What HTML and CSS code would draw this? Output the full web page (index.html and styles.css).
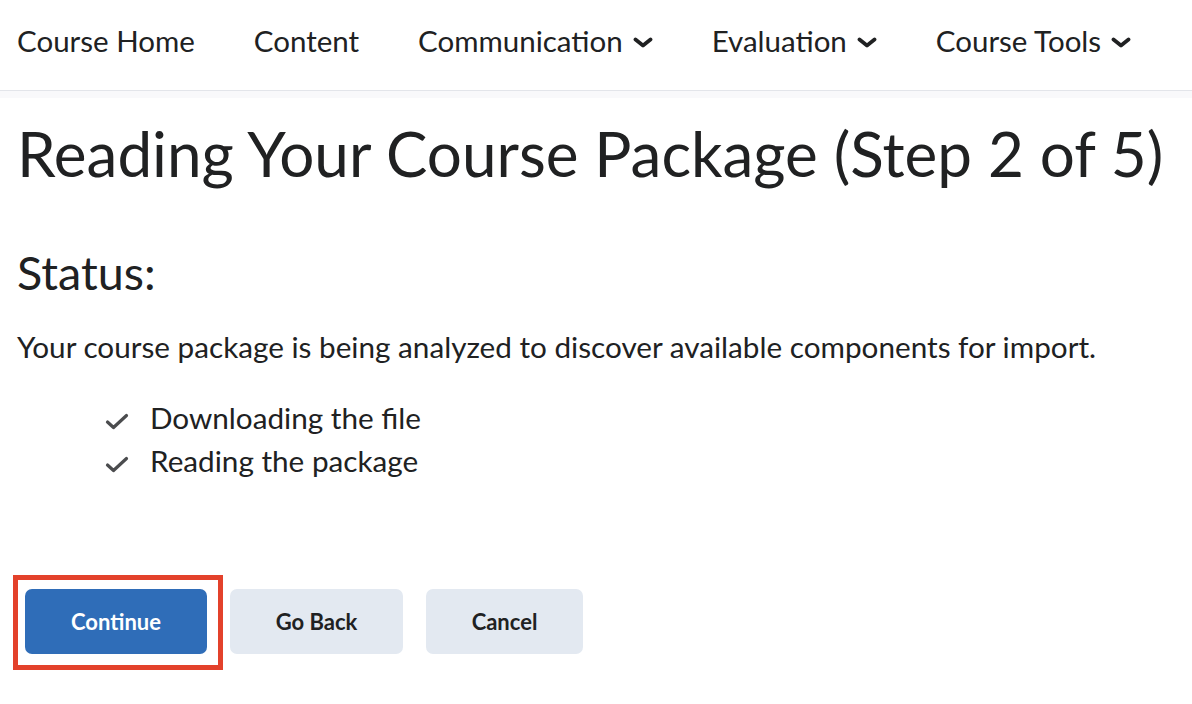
FILE: index.html
```html
<!DOCTYPE html>
<html lang="en">
<head>
<meta charset="utf-8">
<title>Reading Your Course Package</title>
<link rel="stylesheet" href="styles.css">
</head>
<body>
<header class="navbar">
  <nav class="nav">
    <a class="nav-item">Course Home</a>
    <a class="nav-item">Content</a>
    <a class="nav-item">Communication<svg class="chev" viewBox="0 0 20 11" width="20" height="11"><path d="M2.5 2.5 L10 8.5 L17.5 2.5" fill="none" stroke="#202122" stroke-width="3.8" stroke-linecap="round" stroke-linejoin="round"/></svg></a>
    <a class="nav-item">Evaluation<svg class="chev" viewBox="0 0 20 11" width="20" height="11"><path d="M2.5 2.5 L10 8.5 L17.5 2.5" fill="none" stroke="#202122" stroke-width="3.8" stroke-linecap="round" stroke-linejoin="round"/></svg></a>
    <a class="nav-item">Course Tools<svg class="chev" viewBox="0 0 20 11" width="20" height="11"><path d="M2.5 2.5 L10 8.5 L17.5 2.5" fill="none" stroke="#202122" stroke-width="3.8" stroke-linecap="round" stroke-linejoin="round"/></svg></a>
  </nav>
</header>
<div class="strip"></div>
<main class="main">
  <h1 class="title">Reading Your Course Package (Step 2 of 5)</h1>
  <h2 class="subtitle">Status:</h2>
  <p class="desc">Your course package is being analyzed to discover available components for import.</p>
  <ul class="steps">
    <li class="step"><svg class="check" viewBox="0 0 24 17" width="24" height="17"><path d="M2.5 9 L8.5 14.5 L21.5 2.5" fill="none" stroke="#4b4c4e" stroke-width="3.2" stroke-linecap="round" stroke-linejoin="round"/></svg>Downloading the file</li>
    <li class="step"><svg class="check" viewBox="0 0 24 17" width="24" height="17"><path d="M2.5 9 L8.5 14.5 L21.5 2.5" fill="none" stroke="#4b4c4e" stroke-width="3.2" stroke-linecap="round" stroke-linejoin="round"/></svg>Reading the package</li>
  </ul>
  <div class="actions">
    <div class="highlight">
      <button class="btn btn-primary">Continue</button>
    </div>
    <button class="btn btn-secondary btn-back">Go Back</button>
    <button class="btn btn-secondary btn-cancel">Cancel</button>
  </div>
</main>
</body>
</html>
```
FILE: styles.css
```css
* { box-sizing: border-box; }
html, body {
  margin: 0;
  padding: 0;
  background: #ffffff;
  color: #202122;
  font-family: Lato, "Noto Sans", sans-serif;
}
body {
  min-height: 100vh;
}
.navbar {
  height: 91px;
  border-bottom: 1px solid #e3e5ea;
  background: #ffffff;
}
.nav {
  display: flex;
  align-items: center;
  height: 90px;
  padding: 0 0 9px 17px;
  gap: 59px;
}
.nav-item {
  display: flex;
  align-items: center;
  gap: 10px;
  font-size: 29.5px;
  line-height: 36px;
  color: #202122;
  white-space: nowrap;
}
.chev { display: block; margin-top: 3px; }
.strip {
  height: 7px;
  background: #f9f9fb;
}
.main {
  padding: 0 17px 40px;
}
.title {
  margin: 18px 0 0;
  font-size: 62px;
  font-weight: 400;
  line-height: 74px;
  white-space: nowrap;
}
.subtitle {
  margin: 54px 0 0;
  font-size: 46.7px;
  font-weight: 400;
  line-height: 56px;
}
.desc {
  margin: 27px 0 0;
  font-size: 29.7px;
  line-height: 40px;
  white-space: nowrap;
}
.steps {
  list-style: none;
  margin: 29px 0 0;
  padding: 0 0 0 88px;
}
.step {
  display: flex;
  align-items: center;
  gap: 21px;
  font-size: 29.7px;
  line-height: 43px;
}
.check { display: block; flex: none; margin-top: 7px; }
.actions {
  display: flex;
  align-items: center;
  gap: 23px;
  margin-top: 107px;
  padding-left: 8px;
}
.highlight {
  position: relative;
}
.highlight::after {
  content: "";
  position: absolute;
  left: -12px;
  right: -16px;
  top: -14px;
  bottom: -16px;
  border: 5px solid #e3412b;
  pointer-events: none;
}
.btn {
  font-family: Lato, "Noto Sans", sans-serif;
  font-weight: 700;
  font-size: 22px;
  height: 65px;
  border: none;
  border-radius: 7px;
  color: #202122;
  display: block;
}
.btn-primary {
  background: #2f6db8;
  color: #ffffff;
  width: 182px;
}
.btn-secondary {
  background: #e3e9f1;
}
.btn-back { width: 173px; }
.btn-cancel { width: 157px; }
```
